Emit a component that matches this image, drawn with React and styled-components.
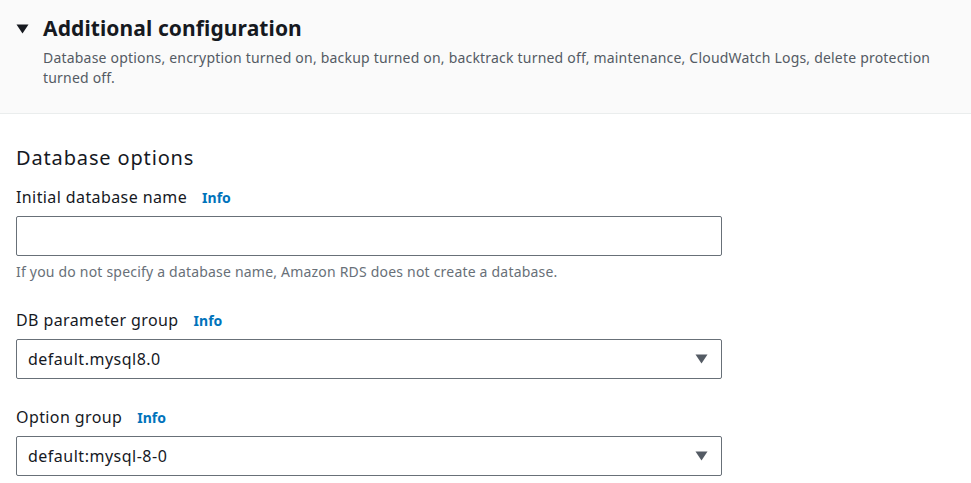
import styled, { createGlobalStyle } from "styled-components";

const GlobalStyle = createGlobalStyle`
  body {
    margin: 0;
    background: #ffffff;
    font-family: "Noto Sans", "Open Sans", Arial, sans-serif;
    color: #16191f;
  }
`;

const fields = [
  {
    label: "Initial database name",
    kind: "input",
    value: "",
    hint: "If you do not specify a database name, Amazon RDS does not create a database.",
  },
  { label: "DB parameter group", kind: "select", value: "default.mysql8.0" },
  { label: "Option group", kind: "select", value: "default:mysql-8-0" },
];

const Caret = () => (
  <svg width="13" height="10" viewBox="0 0 13 10">
    <path d="M0.5 0.5 H12.5 L6.5 9.5 Z" fill="currentColor" />
  </svg>
);

const App = () => {
  return (
    <>
      <GlobalStyle />
      <Page>
        <Header>
          <Toggle>
            <Caret />
          </Toggle>
          <HeaderText>
            <Title>Additional configuration</Title>
            <Description>
              Database options, encryption turned on, backup turned on, backtrack
              turned off, maintenance, CloudWatch Logs, delete protection turned
              off.
            </Description>
          </HeaderText>
        </Header>
        <Body>
          <SectionTitle>Database options</SectionTitle>
          {fields.map((f) => (
            <Field key={f.label}>
              <LabelRow>
                <Label>{f.label}</Label>
                <InfoLink>Info</InfoLink>
              </LabelRow>
              {f.kind === "input" ? (
                <TextInput defaultValue={f.value} />
              ) : (
                <Select>
                  <span>{f.value}</span>
                  <SelectCaret>
                    <Caret />
                  </SelectCaret>
                </Select>
              )}
              {f.hint && <Hint>{f.hint}</Hint>}
            </Field>
          ))}
        </Body>
      </Page>
    </>
  );
};

// --- STYLED COMPONENTS ---

const Page = styled.div`
  width: 971px;
  height: 483px;
  overflow: hidden;
`;

const Header = styled.div`
  display: flex;
  align-items: flex-start;
  gap: 14px;
  background: #fafafa;
  border-bottom: 1px solid #eaeded;
  padding: 13px 16px 0 16px;
  height: 100px;
`;

const Toggle = styled.div`
  color: #16191f;
  padding-top: 11px;
  display: flex;
`;

const HeaderText = styled.div`
  display: flex;
  flex-direction: column;
`;

const Title = styled.h2`
  margin: 0;
  font-size: 21px;
  font-weight: 700;
  line-height: 30px;
  letter-spacing: 0.1px;
`;

const Description = styled.p`
  margin: 5px 0 0;
  font-size: 14px;
  line-height: 20px;
  color: #545b64;
  max-width: 900px;
  letter-spacing: 0.2px;
`;

const Body = styled.div`
  padding: 29px 16px 0;
  display: flex;
  flex-direction: column;
`;

const SectionTitle = styled.h3`
  margin: 0 0 9px;
  font-size: 20px;
  font-weight: 400;
  line-height: 30px;
  letter-spacing: 0.85px;
`;

const Field = styled.div`
  display: flex;
  flex-direction: column;
  width: 706px;
  & + & {
    margin-top: 23px;
  }
`;

const LabelRow = styled.div`
  display: flex;
  align-items: center;
  gap: 15px;
  height: 30px;
  margin-bottom: 4px;
`;

const Label = styled.span`
  font-size: 16px;
  line-height: 22px;
  letter-spacing: 0.4px;
`;

const InfoLink = styled.span`
  font-size: 14px;
  font-weight: 700;
  color: #0073bb;
`;

const TextInput = styled.input`
  box-sizing: border-box;
  height: 40px;
  width: 100%;
  border: 1px solid #687078;
  border-radius: 2px;
  padding: 0 12px;
  font: inherit;
  font-size: 16px;
  outline: none;
  background: #ffffff;
`;

const Select = styled.div`
  box-sizing: border-box;
  height: 40px;
  width: 100%;
  border: 1px solid #687078;
  border-radius: 2px;
  padding: 0 13px 0 11px;
  display: flex;
  align-items: center;
  justify-content: space-between;
  font-size: 16px;
  letter-spacing: 0.5px;
  color: #16191f;
`;

const SelectCaret = styled.div`
  color: #545b64;
  display: flex;
`;

const Hint = styled.div`
  margin-top: 6px;
  font-size: 14px;
  line-height: 20px;
  letter-spacing: 0.2px;
  color: #687078;
`;

export default App;
